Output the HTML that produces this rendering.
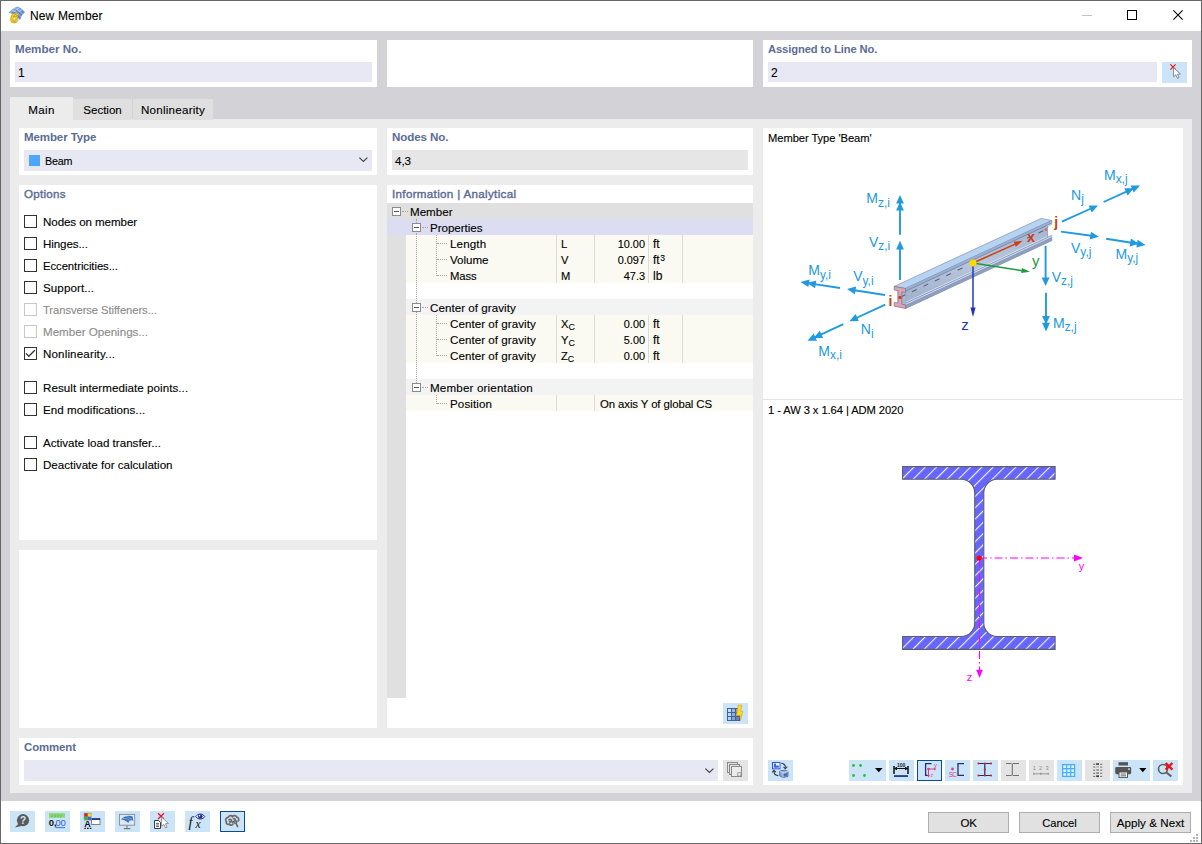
<!DOCTYPE html>
<html>
<head>
<meta charset="utf-8">
<title>New Member</title>
<style>
html,body{margin:0;padding:0;}
body{width:1202px;height:844px;overflow:hidden;background:#fff;position:relative;
 font-family:"Liberation Sans",sans-serif;font-size:12px;color:#000;}
.a{position:absolute;}
#win{left:0;top:0;width:1200px;height:842px;border:1px solid #686868;background:#fff;}
#chrome{left:1px;top:31px;width:1200px;height:770px;background:#d2d2d7;}
.panel{background:#fff;}
.lbl{color:#5b6c96;font-weight:bold;font-size:12px;white-space:nowrap;line-height:14px;}
.t{white-space:nowrap;line-height:14px;height:14px;-webkit-text-stroke:0.12px currentColor;}
.inp{background:#e7e8f3;}
.inpg{background:#e6e6e6;}
#tabc{left:10px;top:119px;width:1182px;height:674px;background:#ececec;}
.tab{background:#dfdfdf;text-align:center;line-height:14px;}
.cb{width:11px;height:11px;border:1px solid #333;background:#fff;}
.cb.dis{border-color:#c8c8c8;}
.dis{color:#8a8a8a;}
.ib{width:25px;height:21px;background:#cce4f7;}
.ibg{width:25px;height:21px;background:#e4e4e4;}
.btn{width:79px;height:19px;border:1px solid #adadad;background:#e1e1e1;text-align:center;line-height:20px;white-space:nowrap;-webkit-text-stroke:0.12px currentColor;}
.row{left:387px;width:366px;height:16px;}
.vl{width:1px;background:#dcdcdc;}
.eb{width:7px;height:7px;border:1px solid #8c8c8c;background:#fff;}
.eb:after{content:"";position:absolute;left:1px;top:3px;width:5px;height:1px;background:#555;}
.dh{height:0;border-top:1px dotted #a6a6a6;}
.dv{width:0;border-left:1px dotted #a6a6a6;}
svg{position:absolute;overflow:visible;}
</style>
</head>
<body>
<div id="win" class="a"></div>
<div id="chrome" class="a"></div>
<!-- title bar -->
<svg style="left:0px;top:0px" width="32" height="32" viewBox="0 0 32 32" font-family="Liberation Sans, sans-serif">
 <defs><linearGradient id="gi" x1="0" y1="0" x2="1" y2="1"><stop offset="0" stop-color="#9cc6f0"/><stop offset="1" stop-color="#3f74c8"/></linearGradient></defs>
 <path d="M9.2 12.6 C12 9.6 15 7.6 17.6 7 C20.6 8 23 10 24.6 12.3 C22.4 13.6 21 16 20 19.4 L13.4 13.2 Z" fill="url(#gi)" stroke="#5a6f92" stroke-width="0.5"/>
 <path d="M12 10.6 C15 11 18.5 13.5 20.8 16.8 M14.6 8.6 C17.6 9.6 20.6 11.6 22.6 14 M13.6 13 C15.6 10.6 17.6 8.6 19.4 7.8 M16.6 15.6 C18 12.8 20 10.6 22 9.6" stroke="#cfe4fa" stroke-width="0.6" fill="none"/>
 <path d="M11.4 13.6 C14 12 17 12.6 19.6 15.4 M15.4 9.6 C17 11.6 18.6 13 20.6 13.6" stroke="#3563b0" stroke-width="0.7" fill="none"/>
 <circle cx="14.3" cy="18.4" r="3.7" fill="#f8cf2c"/>
 <text x="9.9" y="22.5" font-size="15.5" font-weight="bold" font-style="italic" fill="#f8cf2c" stroke="#b0901c" stroke-width="0.5">6</text>
 <circle cx="14.4" cy="18.5" r="1" fill="#fff"/>
</svg>
<div class="a t" style="left:30px;top:9px;letter-spacing:0.14px;">New Member</div>
<div class="a" style="left:1082px;top:15px;width:10px;height:1px;background:#c4c4c4;"></div>
<div class="a" style="left:1127px;top:10px;width:8px;height:8px;border:1px solid #000;"></div>
<svg style="left:1173px;top:10px" width="10" height="10" viewBox="0 0 10 10"><path d="M0.4 0.4 L9.6 9.6 M9.6 0.4 L0.4 9.6" stroke="#000" stroke-width="1.1" fill="none"/></svg>

<!-- top panels -->
<div class="a panel" style="left:10px;top:40px;width:367px;height:47px;"></div>
<div class="a lbl" style="left:15px;top:42px;font-size:11.6px;">Member No.</div>
<div class="a inp" style="left:15px;top:62px;width:357px;height:20px;"></div>
<div class="a t" style="left:18px;top:66px;">1</div>

<div class="a panel" style="left:387px;top:40px;width:366px;height:47px;"></div>

<div class="a panel" style="left:763px;top:40px;width:429px;height:47px;"></div>
<div class="a lbl" style="left:768px;top:42px;font-size:11.2px;letter-spacing:-0.1px;">Assigned to Line No.</div>
<div class="a inp" style="left:768px;top:62px;width:389px;height:20px;"></div>
<div class="a t" style="left:771px;top:66px;">2</div>
<div class="a ib" style="left:1162px;top:62px;"></div>
<svg style="left:1162px;top:62px" width="25" height="21" viewBox="0 0 25 21">
 <path d="M8.4 2.4 L13.6 7.6 M13.6 2.4 L8.4 7.6" stroke="#ee141c" stroke-width="1.2" fill="none"/>
 <path d="M11.6 5.6 L11.6 14.8 L13.8 12.8 L15.5 16.4 L17.1 15.6 L15.4 12.2 L18.4 12 Z" fill="#fff" stroke="#707070" stroke-width="0.8" stroke-linejoin="round"/>
</svg>

<!-- tabs -->
<div id="tabc" class="a"></div>
<div class="a" style="left:10px;top:97px;width:63px;height:24px;background:#ececec;"></div>
<div class="a t" style="left:10px;top:103px;width:63px;text-align:center;font-size:11.6px;letter-spacing:0.35px;">Main</div>
<div class="a tab" style="left:73px;top:99px;width:59px;height:21px;"></div>
<div class="a t" style="left:73px;top:103px;width:59px;text-align:center;font-size:11.6px;letter-spacing:-0.02px;">Section</div>
<div class="a tab" style="left:133px;top:99px;width:80px;height:21px;"></div>
<div class="a t" style="left:133px;top:103px;width:80px;text-align:center;font-size:11.6px;letter-spacing:0.25px;">Nonlinearity</div>
<!-- left column -->
<div class="a panel" style="left:19px;top:128px;width:358px;height:47px;"></div>
<div class="a lbl" style="left:24px;top:130px;font-size:11.5px;letter-spacing:-0.09px;">Member Type</div>
<div class="a inp" style="left:24px;top:150px;width:348px;height:21px;"></div>
<div class="a" style="left:29px;top:155px;width:11px;height:11px;background:#4da6ff;"></div>
<div class="a t" style="left:45px;top:154px;font-size:10.7px;letter-spacing:-0.15px;">Beam</div>
<svg style="left:358.7px;top:157.2px" width="9" height="6" viewBox="0 0 9 6"><path d="M0.4 0.6 L4.4 4.5 L8.4 0.6" stroke="#444" stroke-width="1.2" fill="none"/></svg>

<div class="a panel" style="left:19px;top:185px;width:358px;height:355px;"></div>
<div class="a t" style="left:24px;top:187px;color:#5b6c96;-webkit-text-stroke:0.4px #5b6c96;font-size:11.6px;letter-spacing:0.25px;">Options</div>

<div class="a cb" style="left:24px;top:215px;"></div><div class="a t" style="left:43px;top:215px;font-size:11.6px;letter-spacing:-0.09px;">Nodes on member</div>
<div class="a cb" style="left:24px;top:237px;"></div><div class="a t" style="left:43px;top:237px;font-size:11.6px;letter-spacing:-0.11px;">Hinges...</div>
<div class="a cb" style="left:24px;top:259px;"></div><div class="a t" style="left:43px;top:259px;font-size:11.3px;letter-spacing:-0.06px;">Eccentricities...</div>
<div class="a cb" style="left:24px;top:281px;"></div><div class="a t" style="left:43px;top:281px;font-size:11.6px;letter-spacing:0.09px;">Support...</div>
<div class="a cb dis" style="left:24px;top:303px;"></div><div class="a t dis" style="left:43px;top:303px;font-size:11.2px;letter-spacing:-0.05px;">Transverse Stiffeners...</div>
<div class="a cb dis" style="left:24px;top:325px;"></div><div class="a t dis" style="left:43px;top:325px;font-size:11.6px;">Member Openings...</div>
<div class="a cb" style="left:24px;top:347px;"></div><div class="a t" style="left:43px;top:347px;font-size:11.6px;letter-spacing:0.14px;">Nonlinearity...</div>
<svg style="left:24px;top:347px" width="13" height="13" viewBox="0 0 13 13"><path d="M1.9 6.4 L4.8 9.3 L10.8 3.3" stroke="#333" stroke-width="1.3" fill="none"/></svg>
<div class="a cb" style="left:24px;top:381px;"></div><div class="a t" style="left:43px;top:381px;font-size:11.6px;letter-spacing:0.05px;">Result intermediate points...</div>
<div class="a cb" style="left:24px;top:403px;"></div><div class="a t" style="left:43px;top:403px;font-size:11.6px;letter-spacing:0.05px;">End modifications...</div>
<div class="a cb" style="left:24px;top:436px;"></div><div class="a t" style="left:43px;top:436px;font-size:11.6px;">Activate load transfer...</div>
<div class="a cb" style="left:24px;top:458px;"></div><div class="a t" style="left:43px;top:458px;font-size:11.6px;">Deactivate for calculation</div>

<div class="a panel" style="left:19px;top:550px;width:358px;height:178px;"></div>

<!-- comment -->
<div class="a panel" style="left:19px;top:738px;width:734px;height:47px;"></div>
<div class="a lbl" style="left:24px;top:740px;font-size:11.4px;letter-spacing:-0.1px;">Comment</div>
<div class="a inp" style="left:24px;top:760px;width:694px;height:21px;"></div>
<svg style="left:704.5px;top:767.5px" width="9" height="6" viewBox="0 0 9 6"><path d="M0.4 0.6 L4.4 4.5 L8.4 0.6" stroke="#444" stroke-width="1.2" fill="none"/></svg>
<div class="a ibg" style="left:723px;top:760px;"></div>
<svg style="left:723px;top:760px" width="25" height="21" viewBox="0 0 25 21">
 <rect x="4.5" y="2.5" width="10" height="10" fill="#e4e4e4" stroke="#8a8a8a"/>
 <rect x="6.5" y="4.5" width="10" height="10" fill="#e4e4e4" stroke="#8a8a8a"/>
 <rect x="8.5" y="6.5" width="10" height="10" fill="#ececec" stroke="#8a8a8a"/>
 <rect x="14.8" y="12.8" width="3.2" height="3.2" fill="#f4f4f4" stroke="#8a8a8a" stroke-width="0.8"/>
</svg>
<!-- middle column -->
<div class="a panel" style="left:387px;top:128px;width:366px;height:47px;"></div>
<div class="a lbl" style="left:392px;top:130px;font-size:11.6px;letter-spacing:-0.12px;">Nodes No.</div>
<div class="a inpg" style="left:392px;top:150px;width:356px;height:20px;"></div>
<div class="a t" style="left:395px;top:154px;font-size:11.6px;letter-spacing:-0.07px;">4,3</div>
<div class="a panel" style="left:387px;top:185px;width:366px;height:543px;"></div>
<div class="a t" style="left:392px;top:187px;color:#5b6c96;-webkit-text-stroke:0.4px #5b6c96;font-size:11.6px;letter-spacing:0.33px;">Information | Analytical</div>
<div class="a" style="left:387px;top:203px;width:19px;height:495px;background:#e0e0e0;"></div>
<div class="a row" style="top:203px;background:#e0e0e0;"></div>
<div class="a row" style="top:219px;background:#dcdcf2;"></div>
<div class="a" style="left:406px;top:235px;width:347px;height:16px;background:#fafaf3;"></div>
<div class="a" style="left:406px;top:251px;width:347px;height:16px;background:#fafaf3;"></div>
<div class="a" style="left:406px;top:267px;width:347px;height:16px;background:#fafaf3;"></div>
<div class="a" style="left:406px;top:315px;width:347px;height:16px;background:#fafaf3;"></div>
<div class="a" style="left:406px;top:331px;width:347px;height:16px;background:#fafaf3;"></div>
<div class="a" style="left:406px;top:347px;width:347px;height:16px;background:#fafaf3;"></div>
<div class="a" style="left:406px;top:395px;width:347px;height:16px;background:#fafaf3;"></div>
<div class="a" style="left:406px;top:299px;width:347px;height:16px;background:#f3f3f3;"></div>
<div class="a" style="left:406px;top:379px;width:347px;height:16px;background:#f3f3f3;"></div>
<div class="a vl" style="left:556px;top:235px;height:48px;"></div>
<div class="a vl" style="left:594px;top:235px;height:48px;"></div>
<div class="a vl" style="left:648px;top:235px;height:48px;"></div>
<div class="a vl" style="left:682px;top:235px;height:48px;"></div>
<div class="a vl" style="left:556px;top:315px;height:48px;"></div>
<div class="a vl" style="left:594px;top:315px;height:48px;"></div>
<div class="a vl" style="left:648px;top:315px;height:48px;"></div>
<div class="a vl" style="left:682px;top:315px;height:48px;"></div>
<div class="a vl" style="left:556px;top:395px;height:16px;"></div>
<div class="a vl" style="left:594px;top:395px;height:16px;"></div>
<div class="a dh" style="left:402px;top:211px;width:6px;"></div>
<div class="a dv" style="left:416px;top:219px;height:4px;"></div>
<div class="a dv" style="left:416px;top:233px;height:150px;"></div>
<div class="a dh" style="left:422px;top:227px;width:6px;"></div>
<div class="a dh" style="left:422px;top:307px;width:6px;"></div>
<div class="a dh" style="left:422px;top:387px;width:6px;"></div>
<div class="a dv" style="left:436px;top:235px;height:41px;"></div>
<div class="a dv" style="left:436px;top:315px;height:41px;"></div>
<div class="a dv" style="left:436px;top:395px;height:9px;"></div>
<div class="a dh" style="left:437px;top:243px;width:10px;"></div>
<div class="a dh" style="left:437px;top:259px;width:10px;"></div>
<div class="a dh" style="left:437px;top:275px;width:10px;"></div>
<div class="a dh" style="left:437px;top:323px;width:10px;"></div>
<div class="a dh" style="left:437px;top:339px;width:10px;"></div>
<div class="a dh" style="left:437px;top:355px;width:10px;"></div>
<div class="a dh" style="left:437px;top:403px;width:10px;"></div>
<div class="a eb" style="left:392px;top:207px;"></div>
<div class="a eb" style="left:412px;top:223px;"></div>
<div class="a eb" style="left:412px;top:303px;"></div>
<div class="a eb" style="left:412px;top:383px;"></div>
<div class="a t" style="left:410px;top:205px;font-size:11.6px;">Member</div>
<div class="a t" style="left:430px;top:221px;font-size:11.6px;letter-spacing:-0.03px;">Properties</div>
<div class="a t" style="left:450px;top:237px;font-size:11.6px;letter-spacing:0.14px;">Length</div>
<div class="a t" style="left:561px;top:237px;font-size:11.2px;">L</div>
<div class="a t" style="left:596px;top:237px;width:49px;text-align:right;font-size:10.9px;">10.00</div>
<div class="a t" style="left:653px;top:237px;">ft</div>
<div class="a t" style="left:450px;top:253px;font-size:11.6px;letter-spacing:-0.02px;">Volume</div>
<div class="a t" style="left:561px;top:253px;font-size:11.2px;">V</div>
<div class="a t" style="left:596px;top:253px;width:49px;text-align:right;font-size:10.9px;">0.097</div>
<div class="a t" style="left:653px;top:253px;">ft<span style="font-size:8.5px;position:relative;top:-3px;left:0.5px;">3</span></div>
<div class="a t" style="left:450px;top:269px;font-size:11.3px;letter-spacing:-0.13px;">Mass</div>
<div class="a t" style="left:561px;top:269px;font-size:11.2px;">M</div>
<div class="a t" style="left:596px;top:269px;width:49px;text-align:right;font-size:10.9px;">47.3</div>
<div class="a t" style="left:653px;top:269px;">lb</div>
<div class="a t" style="left:430px;top:301px;font-size:11.6px;letter-spacing:0.04px;">Center of gravity</div>
<div class="a t" style="left:450px;top:317px;font-size:11.6px;letter-spacing:0.04px;">Center of gravity</div>
<div class="a t" style="left:561px;top:317px;font-size:11.2px;">X<span style="font-size:8.8px;position:relative;top:2px;">C</span></div>
<div class="a t" style="left:596px;top:317px;width:49px;text-align:right;font-size:10.9px;">0.00</div>
<div class="a t" style="left:653px;top:317px;">ft</div>
<div class="a t" style="left:450px;top:333px;font-size:11.6px;letter-spacing:0.04px;">Center of gravity</div>
<div class="a t" style="left:561px;top:333px;font-size:11.2px;">Y<span style="font-size:8.8px;position:relative;top:2px;">C</span></div>
<div class="a t" style="left:596px;top:333px;width:49px;text-align:right;font-size:10.9px;">5.00</div>
<div class="a t" style="left:653px;top:333px;">ft</div>
<div class="a t" style="left:450px;top:349px;font-size:11.6px;letter-spacing:0.04px;">Center of gravity</div>
<div class="a t" style="left:561px;top:349px;font-size:11.2px;">Z<span style="font-size:8.8px;position:relative;top:2px;">C</span></div>
<div class="a t" style="left:596px;top:349px;width:49px;text-align:right;font-size:10.9px;">0.00</div>
<div class="a t" style="left:653px;top:349px;">ft</div>
<div class="a t" style="left:430px;top:381px;font-size:11.6px;letter-spacing:0.17px;">Member orientation</div>
<div class="a t" style="left:450px;top:397px;font-size:11.6px;letter-spacing:0.1px;">Position</div>
<div class="a t" style="left:600px;top:397px;font-size:11.4px;letter-spacing:-0.1px;">On axis Y of global CS</div>
<div class="a ib" style="left:723px;top:703px;"></div>
<svg style="left:723px;top:703px" width="25" height="21" viewBox="0 0 25 21">
 <rect x="4" y="5" width="13" height="13" fill="#4c5f92"/>
 <g><rect x="5" y="6" width="3" height="3" fill="#b8e0fe"/><rect x="9" y="6" width="3" height="3" fill="#90b6e2"/><rect x="13" y="6" width="3" height="3" fill="#7a9cd0"/>
 <rect x="5" y="10" width="3" height="3" fill="#b4dcfc"/><rect x="9" y="10" width="3" height="3" fill="#8ab0dc"/><rect x="13" y="10" width="3" height="3" fill="#7092c8"/>
 <rect x="5" y="14" width="3" height="3" fill="#acd4f8"/><rect x="9" y="14" width="3" height="3" fill="#82a6d4"/><rect x="13" y="14" width="3" height="3" fill="#6882b6"/></g>
 <path d="M15.2 2.2 L18.9 2.2 L17.6 8.4 L19.8 8.4 L17.4 17.8 L17.2 12.4 L13.4 12.6 Z" fill="#ffd822" stroke="#d6a208" stroke-width="0.6" stroke-linejoin="round"/>
</svg>
<!-- right column -->
<div class="a panel" style="left:763px;top:128px;width:420px;height:657px;"></div>
<div class="a t" style="left:768px;top:131px;font-size:11.2px;letter-spacing:-0.07px;">Member Type 'Beam'</div>
<div class="a" style="left:763px;top:399px;width:420px;height:1px;background:#e4e4e4;"></div>
<div class="a t" style="left:768px;top:403px;font-size:11.2px;letter-spacing:-0.08px;">1 - AW 3 x 1.64 | ADM 2020</div>
<svg style="left:0;top:0" width="1202" height="844" viewBox="0 0 1202 844" font-family="Liberation Sans, sans-serif">
<defs>
<linearGradient id="gw" x1="0" y1="0" x2="0" y2="1"><stop offset="0" stop-color="#a4b4d0"/><stop offset="0.5" stop-color="#b8c6dc"/><stop offset="1" stop-color="#9cacc8"/></linearGradient>
<pattern id="hatch" width="8" height="8" patternUnits="userSpaceOnUse" patternTransform="rotate(-45 0 0)"><rect width="8" height="8" fill="#6666ff"/><rect y="0" width="8" height="1.1" fill="#f4f4ff"/></pattern>
</defs>
<polygon points="894.2,286.4 1041.2,218.4 1051.8,220.5 905.6,288.5" fill="#b7d3f2" stroke="#7f8fae" stroke-width="0.7"/>
<polygon points="905.6,288.5 1051.8,220.5 1051.8,240.6 905.6,308.5" fill="url(#gw)" stroke="#7585a6" stroke-width="0.7"/>
<polygon points="905.6,288.5 1051.8,220.5 1051.8,223 905.6,291" fill="#98aed2"/>
<path d="M905.6,291.2 L1051.8,223.2" stroke="#71819f" stroke-width="0.8" fill="none"/>
<polygon points="905.6,303.8 1051.8,236 1051.8,240.6 905.6,308.5" fill="#8c9dbf"/>
<path d="M905.6,302.4 L1051.8,234.6" stroke="#e8eef8" stroke-width="0.8" fill="none"/>
<path d="M905.6,303.3 L1051.8,235.5" stroke="#8696b6" stroke-width="0.8" fill="none"/>
<path d="M905.6,304.3 L1051.8,236.5" stroke="#e4ebf6" stroke-width="0.8" fill="none"/>
<polygon points="897.5,290 905.6,291.4 905.6,306 897.5,304.4" fill="#a8b8d4"/>
<path d="M900.6,297.1 L968,265.4" stroke="#55637c" stroke-width="1.1" stroke-dasharray="5.3,7.3" fill="none"/>
<path d="M1027,238.2 L1044,230.4" stroke="#55637c" stroke-width="1.1" stroke-dasharray="5.3,7.3" fill="none"/>
<path d="M894.2,286.4 L905.6,288.5 L905.6,292.4 L901.8,291.8 L901.8,304.2 L905.6,304.8 L905.6,308.5 L894.2,306.2 L894.2,302.4 L898,303 L898,290.6 L894.2,290 Z" fill="#d9a6b8" stroke="#8a6878" stroke-width="0.7"/>
<circle cx="900" cy="297.4" r="1.7" fill="#d23a10"/>
<circle cx="1046" cy="229.5" r="1.5" fill="#d9705a"/>
<polygon points="1047.6,225.6 1052.6,223.3 1052.6,235.2 1047.6,237.6" fill="#ffffff"/>
<path d="M1051.8,224.4 L1047.6,226.3 L1047.6,237 L1051.8,235.2" stroke="#7585a6" stroke-width="0.6" fill="none"/>
<line x1="900.0" y1="234.7" x2="900.0" y2="202.6" stroke="#209adf" stroke-width="1.9"/>
<polygon points="900.0,195.0 903.9,203.6 896.1,203.6" fill="#209adf"/>
<polygon points="900.0,201.8 903.9,210.4 896.1,210.4" fill="#209adf"/>
<line x1="900.0" y1="280.0" x2="900.0" y2="248.4" stroke="#209adf" stroke-width="1.9"/>
<polygon points="900.0,240.8 903.9,249.4 896.1,249.4" fill="#209adf"/>
<line x1="840.0" y1="288.0" x2="808.0" y2="283.1" stroke="#209adf" stroke-width="1.9"/>
<polygon points="800.5,282.0 809.6,279.4 808.4,287.1" fill="#209adf"/>
<polygon points="807.2,283.0 816.3,280.5 815.1,288.2" fill="#209adf"/>
<line x1="885.0" y1="295.0" x2="854.5" y2="290.2" stroke="#209adf" stroke-width="1.9"/>
<polygon points="847.0,289.0 856.1,286.5 854.9,294.2" fill="#209adf"/>
<line x1="885.2" y1="304.6" x2="856.3" y2="318.0" stroke="#209adf" stroke-width="1.9"/>
<polygon points="849.4,321.2 855.6,314.0 858.8,321.1" fill="#209adf"/>
<line x1="843.3" y1="324.2" x2="814.4" y2="337.6" stroke="#209adf" stroke-width="1.9"/>
<polygon points="807.5,340.8 813.7,333.6 816.9,340.7" fill="#209adf"/>
<polygon points="813.7,337.9 819.8,330.8 823.1,337.9" fill="#209adf"/>
<line x1="1103.6" y1="202.0" x2="1133.1" y2="188.6" stroke="#209adf" stroke-width="1.9"/>
<polygon points="1140.0,185.5 1133.8,192.6 1130.6,185.5" fill="#209adf"/>
<polygon points="1133.8,188.3 1127.6,195.4 1124.4,188.3" fill="#209adf"/>
<line x1="1061.9" y1="221.6" x2="1091.1" y2="208.5" stroke="#209adf" stroke-width="1.9"/>
<polygon points="1098.0,205.4 1091.8,212.5 1088.6,205.4" fill="#209adf"/>
<line x1="1061.0" y1="231.6" x2="1091.4" y2="235.8" stroke="#209adf" stroke-width="1.9"/>
<polygon points="1098.9,236.8 1089.8,239.5 1090.9,231.8" fill="#209adf"/>
<line x1="1106.2" y1="238.7" x2="1138.0" y2="243.7" stroke="#209adf" stroke-width="1.9"/>
<polygon points="1145.5,244.9 1136.4,247.4 1137.6,239.7" fill="#209adf"/>
<polygon points="1138.8,243.8 1129.7,246.4 1130.9,238.6" fill="#209adf"/>
<line x1="1045.6" y1="246.0" x2="1045.6" y2="278.4" stroke="#209adf" stroke-width="1.9"/>
<polygon points="1045.6,286.0 1041.7,277.4 1049.5,277.4" fill="#209adf"/>
<line x1="1046.0" y1="292.8" x2="1046.0" y2="323.8" stroke="#209adf" stroke-width="1.9"/>
<polygon points="1046.0,331.4 1042.1,322.8 1049.9,322.8" fill="#209adf"/>
<polygon points="1046.0,324.6 1042.1,316.0 1049.9,316.0" fill="#209adf"/>
<line x1="973.0" y1="263.0" x2="1015.7" y2="243.9" stroke="#d0400f" stroke-width="1.5"/>
<polygon points="1022.5,240.8 1015.9,246.8 1013.6,241.7" fill="#d0400f"/>
<line x1="973.0" y1="263.0" x2="1022.6" y2="270.7" stroke="#1e9a3c" stroke-width="1.4"/>
<polygon points="1030.0,271.8 1021.2,273.1 1022.0,267.9" fill="#1e9a3c"/>
<line x1="973.0" y1="263.0" x2="973.0" y2="308.4" stroke="#2038b8" stroke-width="1.5"/>
<polygon points="973.0,316.9 970.4,307.4 975.6,307.4" fill="#2038b8"/>
<circle cx="973" cy="263" r="3.6" fill="#ffd800"/>
<text x="866.3" y="203.3" fill="#209adf" font-size="14">M<tspan font-size="11.9" dy="3.2">z,i</tspan></text>
<text x="869" y="247" fill="#209adf" font-size="14">V<tspan font-size="11.9" dy="3.2">z,i</tspan></text>
<text x="808.3" y="275.4" fill="#209adf" font-size="14">M<tspan font-size="11.9" dy="3.2">y,i</tspan></text>
<text x="853.2" y="281.4" fill="#209adf" font-size="14">V<tspan font-size="11.9" dy="3.2">y,i</tspan></text>
<text x="860.8" y="334.3" fill="#209adf" font-size="14">N<tspan font-size="11.9" dy="3.2">i</tspan></text>
<text x="818.3" y="355.7" fill="#209adf" font-size="14">M<tspan font-size="11.9" dy="3.2">x,i</tspan></text>
<text x="1104" y="180" fill="#209adf" font-size="14">M<tspan font-size="11.9" dy="3.2">x,j</tspan></text>
<text x="1071" y="199.8" fill="#209adf" font-size="14">N<tspan font-size="11.9" dy="3.2">j</tspan></text>
<text x="1071" y="253" fill="#209adf" font-size="14">V<tspan font-size="11.9" dy="3.2">y,j</tspan></text>
<text x="1115.5" y="258.7" fill="#209adf" font-size="14">M<tspan font-size="11.9" dy="3.2">y,j</tspan></text>
<text x="1051.7" y="282" fill="#209adf" font-size="14">V<tspan font-size="11.9" dy="3.2">z,j</tspan></text>
<text x="1053" y="327.7" fill="#209adf" font-size="14">M<tspan font-size="11.9" dy="3.2">z,j</tspan></text>
<text x="888.5" y="306.4" fill="#d0400f" font-size="14" font-weight="bold">i</text>
<text x="1054.3" y="226.9" fill="#d0400f" font-size="14" font-weight="bold">j</text>
<text x="1027" y="241.7" fill="#d0400f" font-size="14.5" font-weight="bold">x</text>
<text x="1032" y="266" fill="#1e9a3c" font-size="15">y</text>
<text x="961.2" y="330.3" fill="#2038b8" font-size="15">z</text>
<path d="M902.6,466.6 H1055.1 V479.3 H997.3 A13.5,13.5 0 0 0 983.8,492.8 V623.0 A13.5,13.5 0 0 0 997.3,636.5 H1055.1 V649.4 H902.6 V636.5 H961.2 A13.5,13.5 0 0 0 974.7,623.0 V492.8 A13.5,13.5 0 0 0 961.2,479.3 H902.6 Z" fill="url(#hatch)" stroke="#5e5e66" stroke-width="1.1"/>
<line x1="979" y1="558" x2="1076" y2="558" stroke="#ff00ff" stroke-width="1.1" stroke-dasharray="8,3,1.5,3"/>
<polygon points="1083,558 1074,554.6 1074,561.4" fill="#ff00ff"/>
<line x1="979.5" y1="558" x2="979.5" y2="671" stroke="#ff00ff" stroke-width="1.1" stroke-dasharray="8,3,1.5,3"/>
<polygon points="979.5,678 976.2,669.7 982.8,669.7" fill="#ff00ff"/>
<circle cx="979.2" cy="558" r="2.6" fill="#ff0000"/>
<text x="1078.8" y="570.3" fill="#ff00ff" font-size="11">y</text>
<text x="966.8" y="681.4" fill="#ff00ff" font-size="11">z</text>
</svg>
<!-- right panel toolbar -->
<div class="a ib" style="left:768px;top:760px;"></div>
<svg style="left:768px;top:760px" width="25" height="21" viewBox="0 0 25 21">
 <rect x="4.5" y="2.5" width="7.5" height="6.3" fill="#fff" stroke="#2a56e8" stroke-width="1"/>
 <path d="M5.8 3.6 H8 V5.6 H10.8 V7.8 H5.8 Z" fill="#3a66ee"/>
 <path d="M13.4 3.4 C16 3.6 17.4 5.2 17.4 7.4 M15.4 6.8 L17.4 8.8 L19.2 6.6" stroke="#3c3c3c" stroke-width="1.1" fill="none"/>
 <path d="M10.4 15.6 C7.6 15.4 6 13.6 6 11.4 M4.2 12.4 L6 10.4 L8 12.2" stroke="#3c3c3c" stroke-width="1.1" fill="none"/>
 <path d="M11.6 11 L16.6 10 L20 11.4 L20 16.4 L15 17.6 L11.6 15.8 Z" fill="#86a6d8" stroke="#3c5890" stroke-width="0.7"/>
 <path d="M11.6 11 L15 12.6 L20 11.4 M15 12.6 V17.6" stroke="#dce8f8" stroke-width="0.7" fill="none"/>
 <path d="M15.6 14 L19.4 13.2 V15.6 L15.6 16.6 Z" fill="#4a68a8"/>
</svg>

<div class="a ib" style="left:849px;top:760px;width:37px;"></div>
<svg style="left:849px;top:760px" width="37" height="21" viewBox="0 0 37 21">
 <g fill="#22c432"><circle cx="4.5" cy="5.5" r="1.4"/><circle cx="11.5" cy="5.5" r="1.4"/><circle cx="4.5" cy="15.5" r="1.4"/><circle cx="15.5" cy="15.5" r="1.4"/></g>
 <polygon points="26,8 33.6,8 29.8,12.2" fill="#000"/>
</svg>

<div class="a ib" style="left:889px;top:760px;"></div>
<svg style="left:889px;top:760px" width="25" height="21" viewBox="0 0 25 21" font-family="Liberation Sans, sans-serif">
 <text x="12.2" y="6.8" font-size="5" font-weight="bold" text-anchor="middle" fill="#222">100</text>
 <path d="M5 6 V14 M19 6 V14" stroke="#111" stroke-width="1.5" fill="none"/>
 <path d="M5 8.5 H19" stroke="#111" stroke-width="1.1" fill="none"/>
 <polygon points="4.6,8.5 8,6.8 8,10.2" fill="#111"/><polygon points="19.4,8.5 16,6.8 16,10.2" fill="#111"/>
 <rect x="5" y="15.2" width="14" height="1.7" fill="#1f2c78"/>
</svg>

<div class="a" style="left:917px;top:760px;width:23px;height:19px;background:#cce4f7;border:1px solid #0b4a94;"></div>
<svg style="left:917px;top:760px" width="25" height="21" viewBox="0 0 25 21" font-family="Liberation Sans, sans-serif">
 <path d="M14.5 3.6 H8.6 V15.4 H11" stroke="#22306e" stroke-width="1.3" fill="none"/>
 <path d="M11.5 9 H18 M11.5 9 V16" stroke="#d8407e" stroke-width="1" fill="none"/>
 <circle cx="11.5" cy="9" r="1.3" fill="#d8407e"/>
 <polygon points="19.4,9 17,7.6 17,10.4" fill="#d8407e"/><polygon points="11.5,17.4 10.1,15 12.9,15" fill="#d8407e"/>
 <text x="17" y="6.6" font-size="6" fill="#d8407e">y</text><text x="13.8" y="17.2" font-size="4.5" fill="#d8407e">z</text>
</svg>

<div class="a ib" style="left:945px;top:760px;"></div>
<svg style="left:945px;top:760px" width="25" height="21" viewBox="0 0 25 21" font-family="Liberation Sans, sans-serif">
 <path d="M19 3.6 H13 V15.4 H19" stroke="#22306e" stroke-width="1.3" fill="none"/>
 <circle cx="7.5" cy="9" r="1.4" fill="#d8408a"/>
 <text x="3.8" y="17.4" font-size="7.4" fill="#d8408a" letter-spacing="-0.9" textLength="7.4" lengthAdjust="spacingAndGlyphs">SC</text>
</svg>

<div class="a ib" style="left:973px;top:760px;"></div>
<svg style="left:973px;top:760px" width="25" height="21" viewBox="0 0 25 21">
 <path d="M5.5 3.5 H18 M5.5 15.5 H18 M11.8 3.5 V15.5" stroke="#1e2a70" stroke-width="1.2" fill="none"/>
 <g fill="#f01818"><circle cx="5.5" cy="3.5" r="1.1"/><circle cx="11.8" cy="3.5" r="1.1"/><circle cx="18" cy="3.5" r="1.1"/><circle cx="11.8" cy="9.5" r="1.1"/><circle cx="5.5" cy="15.5" r="1.1"/><circle cx="11.8" cy="15.5" r="1.1"/><circle cx="18" cy="15.5" r="1.1"/></g>
</svg>

<div class="a ibg" style="left:1001px;top:760px;"></div>
<svg style="left:1001px;top:760px" width="25" height="21" viewBox="0 0 25 21">
 <path d="M5 3.5 H10.5 M12 3.5 H18 M5 15.5 H10.5 M12 15.5 H18 M11.3 3.5 V15.5" stroke="#707070" stroke-width="1.1" fill="none"/>
</svg>

<div class="a ibg" style="left:1029px;top:760px;"></div>
<svg style="left:1029px;top:760px" width="25" height="21" viewBox="0 0 25 21" font-family="Liberation Sans, sans-serif">
 <text x="3.8" y="10" font-size="5.6" fill="#8e8e8e">1</text><text x="10" y="10" font-size="5.6" fill="#8e8e8e">2</text><text x="16.6" y="10" font-size="5.6" fill="#8e8e8e">3</text>
 <path d="M4.5 13.8 H19.5 M4.8 12.6 V15 M11.8 12.6 V15 M19.2 12.6 V15" stroke="#8e8e8e" stroke-width="0.9" fill="none"/>
</svg>

<div class="a ib" style="left:1057px;top:760px;"></div>
<svg style="left:1057px;top:760px" width="25" height="21" viewBox="0 0 25 21">
 <rect x="5" y="4" width="13.2" height="13" fill="#42b0ff"/>
 <g fill="#def0ff"><rect x="6.3" y="5.3" width="2.8" height="2.7"/><rect x="10.3" y="5.3" width="2.8" height="2.7"/><rect x="14.3" y="5.3" width="2.7" height="2.7"/>
 <rect x="6.3" y="9.3" width="2.8" height="2.7"/><rect x="10.3" y="9.3" width="2.8" height="2.7"/><rect x="14.3" y="9.3" width="2.7" height="2.7"/>
 <rect x="6.3" y="13.2" width="2.8" height="2.6"/><rect x="10.3" y="13.2" width="2.8" height="2.6"/><rect x="14.3" y="13.2" width="2.7" height="2.6"/></g>
</svg>

<div class="a ibg" style="left:1085px;top:760px;"></div>
<svg style="left:1085px;top:760px" width="25" height="21" viewBox="0 0 25 21">
 <rect x="11.2" y="3.2" width="2.8" height="1.8" fill="#444"/><rect x="11.2" y="6" width="2.8" height="1.8" fill="#bdbdbd"/><rect x="11.2" y="9.1" width="2.8" height="1.8" fill="#9a9a9a"/><rect x="11.2" y="12.2" width="2.8" height="1.8" fill="#8a8a8a"/><rect x="11.2" y="15.3" width="2.8" height="1.8" fill="#3c3c3c"/>
 <g fill="#5a5a5a"><rect x="8.2" y="3.8" width="2" height="0.9"/><rect x="15.2" y="3.8" width="2" height="0.9"/><rect x="8.2" y="6.6" width="2" height="0.9"/><rect x="15.2" y="6.6" width="2" height="0.9"/><rect x="8.2" y="9.7" width="2" height="0.9"/><rect x="15.2" y="9.7" width="2" height="0.9"/><rect x="8.2" y="12.8" width="2" height="0.9"/><rect x="15.2" y="12.8" width="2" height="0.9"/><rect x="8.2" y="15.9" width="2" height="0.9"/><rect x="15.2" y="15.9" width="2" height="0.9"/></g>
</svg>

<div class="a ib" style="left:1113px;top:760px;width:37px;"></div>
<svg style="left:1113px;top:760px" width="37" height="21" viewBox="0 0 37 21">
 <rect x="5.5" y="2.2" width="9.5" height="3.3" fill="#555"/>
 <rect x="2.2" y="7" width="16" height="7.2" rx="1.4" fill="#555"/>
 <rect x="6" y="12" width="8.5" height="5.4" fill="#fff" stroke="#555" stroke-width="1"/>
 <path d="M7.6 14 H13 M7.6 15.8 H13" stroke="#555" stroke-width="0.9"/>
 <rect x="15" y="8.5" width="2" height="1.2" fill="#e8f0f8"/>
 <polygon points="26.2,8 33.4,8 29.8,12.2" fill="#000"/>
</svg>

<div class="a ib" style="left:1153px;top:760px;"></div>
<svg style="left:1153px;top:760px" width="25" height="21" viewBox="0 0 25 21">
 <circle cx="10" cy="9" r="4.5" fill="none" stroke="#606060" stroke-width="1.6"/>
 <path d="M13.4 12.4 L18.4 16.6" stroke="#606060" stroke-width="2"/>
 <path d="M12.6 3 L19.4 9.6 M19.4 3 L12.6 9.6" stroke="#f01010" stroke-width="2.4"/>
</svg>

<!-- footer icons -->
<div class="a ib" style="left:10px;top:811px;"></div>
<svg style="left:10px;top:811px" width="25" height="21" viewBox="0 0 25 21" font-family="Liberation Sans, sans-serif">
 <circle cx="13" cy="9.2" r="6.1" fill="#5c5c5c"/><path d="M8.6 12.6 L5 16.6 L11.6 15 Z" fill="#5c5c5c"/>
 <text x="13" y="12.9" font-size="10" font-weight="bold" text-anchor="middle" fill="#d6e9f8">?</text>
</svg>

<div class="a ib" style="left:45px;top:811px;"></div>
<svg style="left:45px;top:811px" width="25" height="21" viewBox="0 0 25 21" font-family="Liberation Sans, sans-serif">
 <rect x="4" y="2.2" width="16" height="4.4" fill="#86d870"/>
 <path d="M7 4 V6.6 M10 4 V6.6 M13 4 V6.6 M16 4 V6.6" stroke="#5db548" stroke-width="0.8"/>
 <text x="3.8" y="15.2" font-size="9.5" font-weight="bold" fill="#111">0,</text>
 <text x="10.6" y="15.2" font-size="9.5" fill="#2f5fe0" letter-spacing="-0.4">00</text>
 <path d="M11 16.6 H20" stroke="#2f5fe0" stroke-width="0.9"/>
</svg>

<div class="a ib" style="left:80px;top:811px;"></div>
<svg style="left:80px;top:811px" width="25" height="21" viewBox="0 0 25 21" font-family="Liberation Sans, sans-serif">
 <rect x="3.8" y="1.8" width="7.6" height="7.6" fill="#8a8a8a"/>
 <rect x="4.5" y="2.5" width="3" height="3" fill="#f01818"/><rect x="7.9" y="2.5" width="3" height="3" fill="#f8e018"/>
 <rect x="4.5" y="5.9" width="3" height="3" fill="#22c032"/><rect x="7.9" y="5.9" width="3" height="3" fill="#4060f0"/>
 <text x="4.2" y="16.2" font-size="9" font-weight="bold" fill="#111">A</text>
 <rect x="11.5" y="7.5" width="8.5" height="6" fill="#fff" stroke="#777" stroke-width="0.9"/>
 <rect x="12" y="7.2" width="8" height="1.8" fill="#2a3a9a"/>
 <path d="M4.4 17.4 H5.8 M7 17.4 H8.6 M9.8 17.4 H11.4" stroke="#111" stroke-width="1.3"/>
</svg>

<div class="a ib" style="left:115px;top:811px;"></div>
<svg style="left:115px;top:811px" width="25" height="21" viewBox="0 0 25 21">
 <rect x="4.5" y="3.4" width="15.2" height="10.8" fill="#dbe9f6" stroke="#8a8a8a" stroke-width="0.9"/>
 <path d="M6 8.6 C8.6 5.2 13.6 4 17.6 5.4 L18.4 10 C16 8.4 14 9.6 13.4 12 C11 9.6 8.4 8.8 6 8.6 Z" fill="#3f72ba"/>
 <path d="M8 7.4 C11 7.2 14 8.4 15.6 10 M11 5.4 C13.4 6 15.6 7.4 17.4 8.8" stroke="#9cc0ea" stroke-width="0.6" fill="none"/>
 <path d="M12 14.4 V17.4 M8.8 17.6 H15.4" stroke="#777" stroke-width="1.1"/>
</svg>

<div class="a ib" style="left:150px;top:811px;"></div>
<svg style="left:150px;top:811px" width="25" height="21" viewBox="0 0 25 21">
 <path d="M8 2.2 L14 8 M14 2.2 L8 8" stroke="#ee141c" stroke-width="1.3" fill="none"/>
 <path d="M4.5 9.5 H8.6 L10.5 11.4 V17.5 H4.5 Z" fill="#fff" stroke="#3a3a3a" stroke-width="1"/>
 <path d="M6 12.4 H9 M6 14 H9 M6 15.6 H9" stroke="#3a3a3a" stroke-width="0.8"/>
 <path d="M11.6 6 L11.6 15.4 L13.8 13.3 L15.5 17 L17.1 16.2 L15.4 12.7 L18.5 12.5 Z" fill="#fff" stroke="#8a8a8a" stroke-width="0.9" stroke-linejoin="round"/>
</svg>

<div class="a ib" style="left:185px;top:811px;"></div>
<svg style="left:185px;top:811px" width="25" height="21" viewBox="0 0 25 21" font-family="Liberation Serif, serif">
 <text x="3.6" y="16.4" font-size="14.5" font-style="italic" fill="#111">f</text>
 <text x="10.4" y="16.6" font-size="11.5" font-style="italic" fill="#111">x</text>
 <path d="M10.8 5.6 C12.8 2.2 17.8 2.2 19.8 5.6 C17.8 8.8 12.8 8.8 10.8 5.6 Z" fill="#eef2ff" stroke="#2a2a8a" stroke-width="1"/>
 <circle cx="15.3" cy="5.5" r="2.3" fill="#2a2a8a"/><circle cx="14.6" cy="4.8" r="0.7" fill="#fff"/>
</svg>

<div class="a" style="left:220px;top:811px;width:23px;height:19px;background:#cce4f7;border:1px solid #0b4a94;"></div>
<svg style="left:220px;top:811px" width="25" height="21" viewBox="0 0 25 21">
 <g fill="none" stroke="#6a6a6a" stroke-width="1.7" stroke-linecap="round">
 <path d="M8.4 6 C9.4 4.4 11.6 4.2 12.4 5.6 C13.4 4 16.4 4.2 16.8 6.2 C18.8 6.6 19.4 9 18 10.2"/>
 <path d="M7.6 6.6 C5.6 7 5 9.4 6.4 10.6 C5.6 12.4 7.6 14 9.2 13 C10 14.6 12.4 14.6 13 13"/>
 <path d="M9 9 C10 8 11.6 8.4 11.6 9.8 C11.6 11 10.4 11.4 9.6 10.8"/>
 <path d="M13.6 7.6 C15 7.4 15.8 8.6 15 9.6 C16.6 9.8 17 11.6 15.8 12.4 C17 13.4 17 14.6 17.6 15.6"/>
 <path d="M12.6 11 C13.4 10.4 14.4 10.8 14.4 11.8"/>
 </g>
</svg>

<!-- footer buttons -->
<div class="a btn" style="left:928px;top:812px;font-size:11.5px;letter-spacing:-0.22px;">OK</div>
<div class="a btn" style="left:1019px;top:812px;font-size:11.2px;letter-spacing:-0.09px;">Cancel</div>
<div class="a btn" style="left:1110px;top:812px;font-size:11.6px;letter-spacing:0.05px;">Apply &amp; Next</div>
<!-- size grip -->
<svg style="left:1190px;top:834px" width="9" height="9" viewBox="0 0 9 9">
 <g fill="#b4b4b4"><rect x="6" y="0" width="2" height="2"/><rect x="3" y="3" width="2" height="2"/><rect x="6" y="3" width="2" height="2"/><rect x="0" y="6" width="2" height="2"/><rect x="3" y="6" width="2" height="2"/><rect x="6" y="6" width="2" height="2"/></g>
</svg>
</body>
</html>
